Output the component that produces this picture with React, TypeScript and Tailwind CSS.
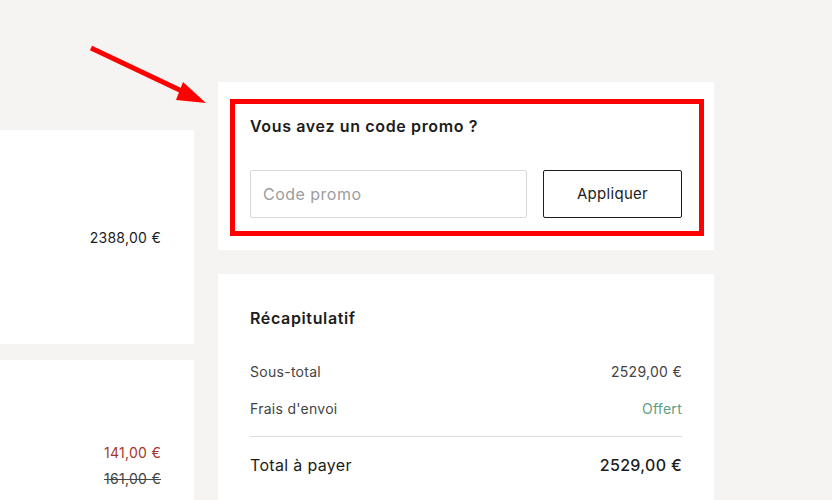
export default function App() {
  return (
    <div
      className="relative h-[500px] w-[832px] overflow-hidden bg-[#f5f4f2] text-[#1c1c1c]"
      style={{ fontFamily: 'Inter, "Noto Sans", sans-serif' }}
    >
      <div className="flex items-start gap-6 pt-[82px]">
        <div className="mt-12 flex w-[194px] flex-col gap-4">
          <div className="flex h-[214px] items-center justify-end bg-white pr-[33px]">
            <span className="text-[14px] tracking-[0.02em]">2388,00 €</span>
          </div>
          <div className="flex h-[160px] flex-col items-end bg-white pr-[33px] pt-[82px] text-[14px] tracking-[0.02em]">
            <span className="text-[#a5372a]">141,00 €</span>
            <span className="mt-[5px] text-[#444] line-through">161,00 €</span>
          </div>
        </div>

        <div className="flex w-[496px] flex-col gap-6">
          <PromoCard />
          <SummaryCard />
        </div>
      </div>

      <ArrowAnnotation />
    </div>
  )
}

function PromoCard() {
  return (
    <section className="relative bg-white px-8 pb-8 pt-[34px]">
      <h2 className="text-[16px] font-semibold leading-5 tracking-[0.04em]">Vous avez un code promo ?</h2>
      <div className="mt-[34px] flex gap-4">
        <input
          type="text"
          placeholder="Code promo"
          className="h-12 min-w-0 flex-1 rounded-[2px] border border-[#d9d9d9] px-3 text-[16px] tracking-[0.03em] outline-none placeholder:text-[#9d9d9d]"
        />
        <button
          type="button"
          className="h-12 w-[139px] rounded-[2px] border border-[#1c1c1c] text-[15px] tracking-[0.02em]"
        >
          Appliquer
        </button>
      </div>
      {/* annotation box */}
      <div className="pointer-events-none absolute bottom-[14px] left-3 right-[10px] top-[17px] border-[5px] border-[#ff0000]" />
    </section>
  )
}

function SummaryCard() {
  return (
    <section className="h-[260px] bg-white px-8 pt-[34px]">
      <h2 className="text-[16px] font-semibold leading-5 tracking-[0.04em]">Récapitulatif</h2>
      <div className="mt-[34px] flex flex-col gap-[17px] text-[14px] tracking-[0.02em] text-[#444]">
        <div className="flex justify-between leading-5">
          <span>Sous-total</span>
          <span>2529,00 €</span>
        </div>
        <div className="flex justify-between leading-5">
          <span>Frais d'envoi</span>
          <span className="text-[#5b9e80]">Offert</span>
        </div>
      </div>
      <div className="mt-[17px] border-t border-[#dcdcdc]" />
      <div className="mt-[18px] flex justify-between text-[16px] leading-5 tracking-[0.02em]">
        <span>Total à payer</span>
        <span className="font-medium">2529,00 €</span>
      </div>
    </section>
  )
}

function ArrowAnnotation() {
  return (
    <svg className="pointer-events-none absolute left-0 top-0" width="832" height="500" viewBox="0 0 832 500">
      <line x1="91" y1="48" x2="186" y2="93" stroke="#ff0000" strokeWidth="5" />
      <polygon points="206,103 183,82 176,100" fill="#ff0000" />
    </svg>
  )
}
